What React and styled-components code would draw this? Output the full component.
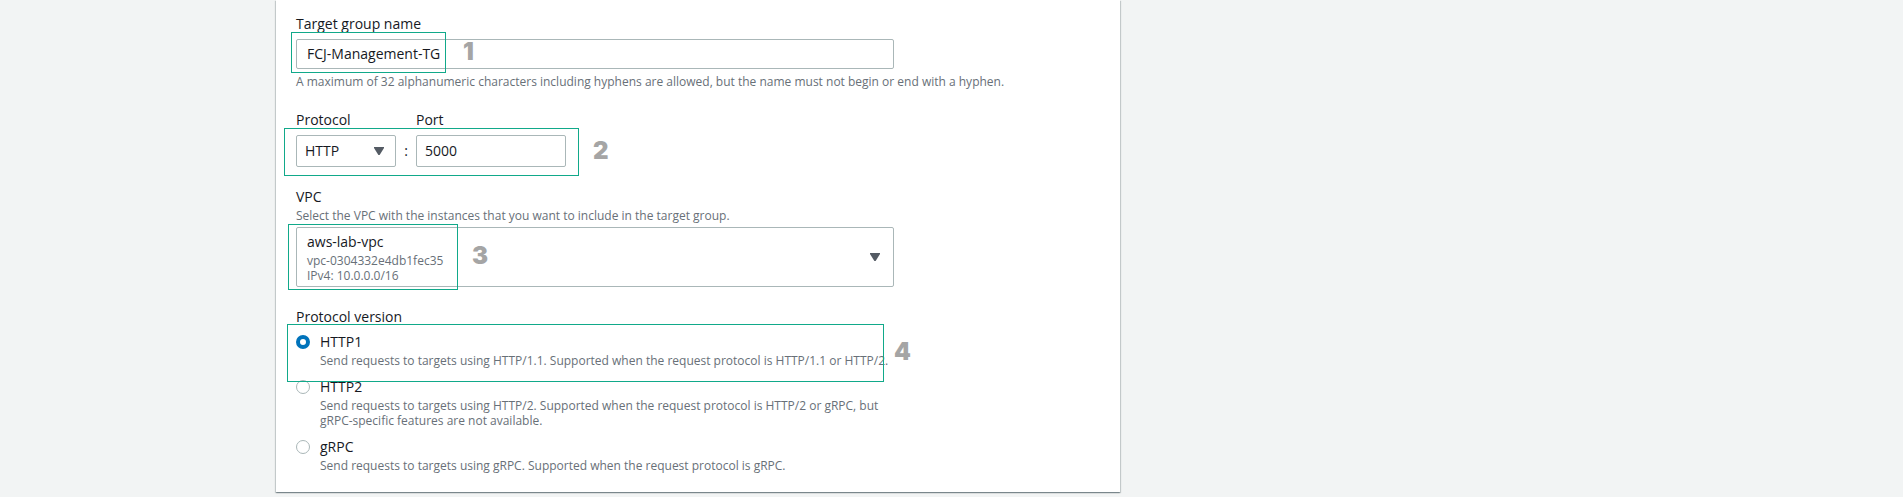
import React, { useState } from "react";
import styled, { createGlobalStyle, css } from "styled-components";

const GlobalStyle = createGlobalStyle`
  *, *::before, *::after { box-sizing: border-box; }
  body {
    margin: 0;
    background: #f2f4f4;
    color: #16191f;
    font: 14px/22px "Open Sans", "Noto Sans", sans-serif;
  }
`;

const Page = styled.main`
  display: grid;
  grid-template-columns: minmax(12px, 276px) minmax(0, 844px) minmax(12px, 1fr);
  padding-bottom: 5px;
`;

const Card = styled.form`
  grid-column: 2;
  display: flex;
  flex-direction: column;
  gap: 19px;
  padding: 13px 20px 19px;
  background: #fff;
  box-shadow: 0 1px 1px 0 rgba(0, 28, 36, 0.3), 1px 1px 1px 0 rgba(0, 28, 36, 0.15),
    -1px 1px 1px 0 rgba(0, 28, 36, 0.15);
`;

const Field = styled.div`
  display: flex;
  flex-direction: column;
`;

const Label = styled.label`
  display: block;
  align-self: flex-start;
`;

const Hint = styled.p`
  margin: 0;
  color: #687078;
  font-size: 12px;
  line-height: 15px;
`;

const Constraint = styled(Hint)`
  padding: 5px 0 1px;
`;

const controlStyle = css`
  display: block;
  width: 100%;
  margin: 0;
  border: 1px solid #aab7b8;
  border-radius: 2px;
  background: #fff;
  color: #16191f;
  font: inherit;
`;

const TextInput = styled.input`
  ${controlStyle}
  height: ${(p) => (p.$compact ? 32 : 30)}px;
  padding: 0 ${(p) => (p.$compact ? 8 : 10)}px 2px;
`;

const Select = styled.select`
  ${controlStyle}
  appearance: none;
  height: 32px;
  padding: 0 30px 0 8px;
`;

const Picker = styled.button`
  ${controlStyle}
  display: flex;
  align-items: center;
  justify-content: space-between;
  padding: 3px 13px 3px 10px;
  text-align: left;
`;

const PickerText = styled.span`
  display: flex;
  flex-direction: column;
`;

const PickerDetail = styled.span`
  color: #687078;
  font-size: 12px;
  line-height: 15px;
`;

const Caret = styled.svg`
  display: block;
  flex: none;
  width: 10px;
  height: 8px;
  fill: #545b64;
`;

const SelectCaret = styled(Caret)`
  position: absolute;
  top: 12px;
  right: 12px;
  pointer-events: none;
`;

/* Holds a control together with the callout drawn over it. */
const Control = styled.div`
  position: relative;
  max-width: 598px;
  margin-top: 4px;
`;

const Endpoint = styled.div`
  position: relative;
  display: grid;
  grid-template-columns: 100px 20px 150px;
  row-gap: 4px;
`;

const Colon = styled.span`
  grid-area: 2 / 2;
  align-self: center;
  text-align: center;
`;

const SelectBox = styled.div`
  position: relative;
  grid-area: 2 / 1;
`;

const PortLabel = styled(Label)`
  grid-area: 1 / 3;
`;

const PortBox = styled.div`
  grid-area: 2 / 3;
`;

const Fieldset = styled.fieldset`
  min-width: 0;
  margin: 0;
  padding: 0;
  border: 0;
`;

const Legend = styled.legend`
  padding: 0;
`;

const Options = styled.div`
  position: relative;
  display: flex;
  flex-direction: column;
  gap: 8px;
  max-width: 598px;
  padding-top: 3px;
`;

const Option = styled.div`
  display: grid;
  grid-template-columns: 14px minmax(0, 1fr);
  column-gap: 10px;
`;

const Radio = styled.input`
  appearance: none;
  align-self: center;
  width: 14px;
  height: 14px;
  margin: 0;
  border: 1px solid #aab7b8;
  border-radius: 50%;
  background: #fff;

  &:checked {
    border: 4px solid #0073bb;
  }
`;

const OptionHint = styled(Hint)`
  grid-column: 2;
`;

const Callout = styled.span`
  position: absolute;
  top: ${(p) => p.$top}px;
  left: ${(p) => p.$left}px;
  width: ${(p) => p.$width}px;
  height: ${(p) => p.$height}px;
  border: 1px solid #11a98a;
  pointer-events: none;
`;

const CalloutNumber = styled.span`
  position: absolute;
  top: 50%;
  left: 100%;
  margin: -13px 0 0 ${(p) => p.$gap}px;
  color: #a5a5a5;
  font: 900 24px/24px Inter, "Liberation Sans", sans-serif;
`;

function CaretDown({ as: Shape = Caret }) {
  return (
    <Shape viewBox="0 0 10 8" aria-hidden="true">
      <path d="M0 0H10V1L5.6 8H4.4L0 1Z" />
    </Shape>
  );
}

function Marker({ number, top, left, width, height, gap }) {
  return (
    <Callout $top={top} $left={left} $width={width} $height={height}>
      <CalloutNumber $gap={gap}>{number}</CalloutNumber>
    </Callout>
  );
}

const versions = [
  {
    id: "http1",
    name: "HTTP1",
    hint: "Send requests to targets using HTTP/1.1. Supported when the request protocol is HTTP/1.1 or HTTP/2.",
  },
  {
    id: "http2",
    name: "HTTP2",
    hint: "Send requests to targets using HTTP/2. Supported when the request protocol is HTTP/2 or gRPC, but gRPC-specific features are not available.",
  },
  {
    id: "grpc",
    name: "gRPC",
    hint: "Send requests to targets using gRPC. Supported when the request protocol is gRPC.",
  },
];

export default function App() {
  const [version, setVersion] = useState("http1");

  return (
    <>
      <GlobalStyle />
      <Page>
        <Card>
          <Field>
            <Label htmlFor="name">Target group name</Label>
            <Control>
              <TextInput id="name" defaultValue="FCJ-Management-TG" aria-describedby="name-hint" />
              <Marker number="1" top={-7} left={-5} width={155} height={41} gap={18} />
            </Control>
            <Constraint id="name-hint">
              A maximum of 32 alphanumeric characters including hyphens are allowed, but the name must not begin or end
              with a hyphen.
            </Constraint>
          </Field>

          <Endpoint>
            <Label htmlFor="protocol">Protocol</Label>
            <PortLabel htmlFor="port">Port</PortLabel>
            <SelectBox>
              <Select id="protocol" defaultValue="HTTP">
                <option>HTTP</option>
                <option>HTTPS</option>
              </Select>
              <CaretDown as={SelectCaret} />
            </SelectBox>
            <Colon>:</Colon>
            <PortBox>
              <TextInput id="port" $compact inputMode="numeric" defaultValue="5000" />
            </PortBox>
            <Marker number="2" top={19} left={-12} width={295} height={48} gap={15} />
          </Endpoint>

          <Field>
            <Label id="vpc-label" htmlFor="vpc">
              VPC
            </Label>
            <Hint id="vpc-hint">Select the VPC with the instances that you want to include in the target group.</Hint>
            <Control>
              <Picker
                id="vpc"
                type="button"
                aria-haspopup="listbox"
                aria-labelledby="vpc-label vpc"
                aria-describedby="vpc-hint"
              >
                <PickerText>
                  aws-lab-vpc
                  <PickerDetail>vpc-0304332e4db1fec35</PickerDetail>
                  <PickerDetail>IPv4: 10.0.0.0/16</PickerDetail>
                </PickerText>
                <CaretDown />
              </Picker>
              <Marker number="3" top={-3} left={-8} width={170} height={66} gap={15} />
            </Control>
          </Field>

          <Fieldset>
            <Legend>Protocol version</Legend>
            <Options>
              {versions.map(({ id, name, hint }) => (
                <Option key={id}>
                  <Radio
                    type="radio"
                    name="version"
                    id={id}
                    checked={version === id}
                    onChange={() => setVersion(id)}
                    aria-describedby={`${id}-hint`}
                  />
                  <Label htmlFor={id}>{name}</Label>
                  <OptionHint id={`${id}-hint`}>{hint}</OptionHint>
                </Option>
              ))}
              <Marker number="4" top={-4} left={-9} width={597} height={58} gap={11} />
            </Options>
          </Fieldset>
        </Card>
      </Page>
    </>
  );
}
